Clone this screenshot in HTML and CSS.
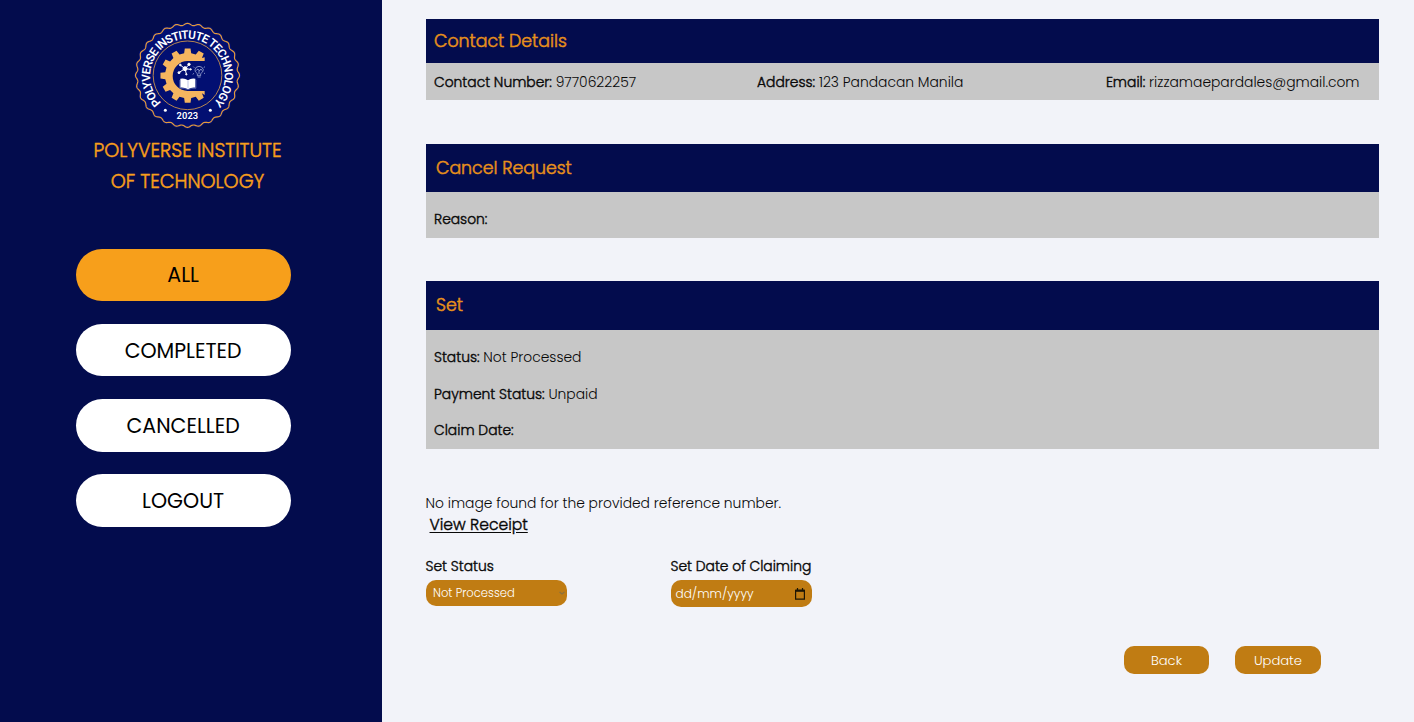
FILE: index.html
```
<!DOCTYPE html>
<html lang="en">
<head>
<meta charset="utf-8">
<title>Polyverse Institute of Technology</title>
<link rel="stylesheet" href="styles.css">
</head>
<body>
<div class="page">
  <aside class="sidebar">
    <svg class="logo" viewBox="0 0 360 360" role="img" aria-label="Institute seal">
      <defs><path id="ring" d="M103 263 A112 112 0 1 1 260 263"/></defs>
      <path id="seal-back" fill="#020f72"/>
      <path id="seal-a" class="wave"/>
      <circle cx="181.500" cy="181" r="103" fill="none" stroke="#d99c49" stroke-width="2.500"/>
      <text class="ring-text"><textPath href="#ring" textLength="530" lengthAdjust="spacing">POLYVERSE INSTITUTE TECHNOLOGY</textPath></text>
      <text class="year" x="181" y="313" text-anchor="middle" textLength="65">2023</text>
      <circle cx="115" cy="286" r="4.500" fill="#fff"/>
      <circle cx="250" cy="286" r="4.500" fill="#fff"/>
      <path id="gear" fill="#f5b55f"/>
      <g stroke="#fff" stroke-width="3" fill="#fff">
        <path d="M174 161L161 151M174 161L186 149M174 161L190 163M174 161L157 172M174 161L178 177" fill="none"/>
        <circle cx="174" cy="161" r="6"/>
        <circle cx="160" cy="150" r="2.500"/><circle cx="186" cy="148" r="3.500"/>
        <circle cx="191" cy="163" r="2"/><circle cx="156" cy="173" r="3"/><circle cx="178" cy="178" r="2"/>
      </g>
      <g fill="none" stroke="#c3cbe8" stroke-width="2">
        <path d="M211 182v-6q-8-5-7-12q2-10 12-10t13 10q0 7-8 12v6zM212 186h9M208 166l5-4 4 6 5-6 3 5M216 168v10M202 158l-3-3M230 158l4-3M231 174l3 2M201 175l-4 3"/>
      </g>
      <path fill="#fff" d="M160 191q13-3 23 5q10-8 22-5v27q-13-1-22 5q-10-6-23-5z"/>
      <path d="M183 197v23M158 195v25q16-1 25 4q8-5 24-4v-25" fill="none" stroke="#7f8bc5" stroke-width="1.500"/>
    </svg>
    <h1 class="school">POLYVERSE INSTITUTE<br>OF TECHNOLOGY</h1>
    <nav class="menu">
      <a class="pill active">ALL</a>
      <a class="pill">COMPLETED</a>
      <a class="pill">CANCELLED</a>
      <a class="pill">LOGOUT</a>
    </nav>
  </aside>
  <main class="content">
    <section class="panel">
      <h2 class="head compact">Contact Details</h2>
      <div class="contact">
        <p><b>Contact Number:</b> 9770622257</p>
        <p><b>Address:</b> 123 Pandacan Manila</p>
        <p><b>Email:</b> rizzamaepardales@gmail.com</p>
      </div>
    </section>
    <section class="panel">
      <h2 class="head">Cancel Request</h2>
      <div class="rows single"><p><b>Reason:</b></p></div>
    </section>
    <section class="panel">
      <h2 class="head tall">Set</h2>
      <div class="rows">
        <p><b>Status:</b> Not Processed</p>
        <p><b>Payment Status:</b> Unpaid</p>
        <p><b>Claim Date:</b></p>
      </div>
    </section>
    <p class="notice">No image found for the provided reference number.</p>
    <a class="receipt">View Receipt</a>
    <form class="fields">
      <div class="field">
        <label>Set Status</label>
        <div class="control select"><span>Not Processed</span>
          <svg width="6" height="4" viewBox="0 0 6 4"><path d="M.5 1L3 3L5.500 1" fill="none" stroke="#8c713f" stroke-width="1.200"/></svg>
        </div>
      </div>
      <div class="field">
        <label>Set Date of Claiming</label>
        <div class="control date"><span>dd/mm/yyyy</span>
          <svg width="10" height="12" viewBox="0 0 10 12"><path d="M.6 2.500h8.800v8.600H.6zM2.500 0v2M7.500 0v2" fill="none" stroke="#1d1604" stroke-width="1.200"/><path d="M.3 1.500h9.400v2.300H.3z" fill="#1d1604"/></svg>
        </div>
      </div>
    </form>
    <div class="actions">
      <button class="btn" type="button">Back</button>
      <button class="btn" type="button">Update</button>
    </div>
  </main>
</div>
<script src="seal.js"></script>
</body>
</html>
```
FILE: styles.css
```
* { box-sizing: border-box; }
body { margin: 0; font-family: Poppins, Inter, sans-serif; font-weight: 300; color: #080808; background: #f2f3f9; }
h1, h2, p { margin: 0; font-weight: 300; }
.page { display: flex; width: 1414px; height: 722px; overflow: hidden; }

.sidebar { width: 382px; height: 722px; background: #030c4d; padding-top: 15px; flex: none; }
.logo { display: block; width: 120px; height: 120px; margin-left: 127px; }
.wave { fill: none; stroke: #e39a3c; stroke-width: 3.6; }
.ring-text { font: 600 35px Roboto, sans-serif; fill: #fff; }
.year { font: 600 28px Roboto, sans-serif; fill: #fff; }
.school { width: 375px; padding-top: 1px; font-size: 19.07px; line-height: 30.5px; text-align: center; color: #f79f1b; -webkit-text-stroke: .45px; }
.menu { display: flex; flex-direction: column; gap: 22.9px; margin: 51.6px 0 0 75.6px; }
.pill { display: flex; align-items: center; justify-content: center; width: 215px; height: 52.4px; border-radius: 27px; background: #fff; color: #000; font-size: 20.5px; font-weight: 400; }
.active { background: #f79f1b; }

.content { flex: 1; padding: 19px 35.5px 0 43.5px; }
.panel { background: #c7c7c7; margin-bottom: 43.5px; }
.head { height: 48.5px; padding-left: 10.5px; line-height: 48px; font-size: 17.36px; color: #e8911b; background: #030c4d; -webkit-text-stroke: .5px; }
.compact { height: 44px; padding-left: 8.5px; line-height: 44px; }
.tall { height: 49px; }
b, label { font-weight: 300; -webkit-text-stroke: .4px; }
.contact, .rows, .notice { font-size: 13.87px; }
.contact { display: grid; grid-template-columns: 323px 1fr auto; height: 37px; padding: 0 19px 0 8.5px; line-height: 39px; }
.rows { padding: 9px 8.5px 0; height: 119px; line-height: 36.6px; }
.single { height: 45.5px; }
.notice { line-height: 21px; margin-top: 42px; }
.receipt { display: block; margin-left: 4px; font-size: 15.6px; line-height: 21px; -webkit-text-stroke: .4px; text-decoration: underline; text-underline-offset: 2px; }
.fields { display: flex; gap: 103.5px; margin-top: 20.4px; }
.field { width: 141.5px; }
.field label { display: block; font-size: 13.87px; line-height: 22px; margin-bottom: 3px; white-space: nowrap; }
.control { display: flex; align-items: center; justify-content: space-between; border-radius: 10px; background: #c07c13; color: #fff; }
.select { height: 26px; padding: 1px 2px 0 7.5px; font-size: 11.57px; }
.date { height: 27.5px; padding: 1px 7px 0 5px; font-size: 12.1px; }
.actions { display: flex; justify-content: flex-end; gap: 26px; margin: 38.4px 57.8px 0 0; }
.btn { width: 85.5px; height: 28.5px; padding: 2px 0 0; border: 0; border-radius: 10px; background: #c07c13; color: #fff; font: 300 13.1px Poppins, Inter, sans-serif; }
```
FILE: seal.js
```
// Outlines of the seal: the scalloped ring and the open gear.
const cx = 181.5, cy = 181;
function wave(base, amp, lobes) {
  let d = '';
  for (let i = 0; i < 720; i++) {
    const a = i * Math.PI / 360;
    const r = base + amp * Math.cos(a * lobes);
    d += (i ? 'L' : 'M') + (cx + r * Math.cos(a)).toFixed(2) + ' ' + (cy + r * Math.sin(a)).toFixed(2);
  }
  return d + 'Z';
}
document.getElementById('seal-back').setAttribute('d', wave(158, 3, 28));
document.getElementById('seal-a').setAttribute('d', wave(153, 3, 28));

let gear = 'M233 138H182A45 45 0 0 0 182 228H233V240';
const point = (deg, r) => {
  const a = deg * Math.PI / 180;
  gear += 'L' + (182 + r * Math.cos(a)).toFixed(1) + ' ' + (182 + r * Math.sin(a)).toFixed(1);
};
for (let t = 60; t <= 300; t += 30) {
  point(t - 9, 68); point(t - 6, 82); point(t + 6, 82); point(t + 9, 68);
}
gear += 'L233 127Z';
document.getElementById('gear').setAttribute('d', gear);
```
